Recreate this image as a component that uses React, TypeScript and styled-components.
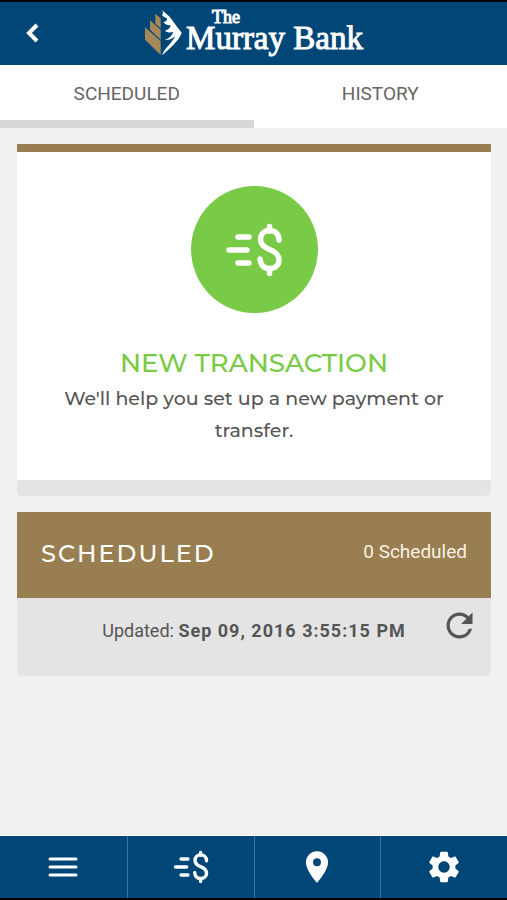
import React from "react";
import styled, { createGlobalStyle } from "styled-components";
import { MdPlace, MdRefresh, MdSettings } from "react-icons/md";

const colors = {
  blue: "#004677",
  divider: "#3f759b",
  gold: "#987e50",
  green: "#78ca47",
  page: "#f1f1f1",
  panel: "#e4e4e4",
  text: "#555555",
};

const display = `Montserrat, Inter, "Open Sans", sans-serif`;

const GlobalStyle = createGlobalStyle`
  *, *::before, *::after { box-sizing: border-box; }
  body {
    margin: 0;
    background: ${colors.page};
    color: ${colors.text};
    font-family: Roboto, "Liberation Sans", sans-serif;
  }
  h1, h2, p { margin: 0; font-weight: 400; }
  button { border: 0; padding: 0; background: none; color: inherit; font: inherit; cursor: pointer; }
  svg { display: block; }
`;

const Screen = styled.div`
  display: flex;
  flex-direction: column;
  min-height: 100vh;
  border-top: 2px solid #000;
  border-bottom: 2px solid #000;
`;

const Header = styled.header`
  display: grid;
  grid-template-columns: 64px 1fr 64px;
  align-items: center;
  height: 63px;
  background: ${colors.blue};
  color: #fff;
`;

const BackButton = styled.button`
  display: flex;
  align-items: center;
  justify-content: center;
  height: 100%;
  padding-bottom: 2px;
`;

const Brand = styled.h1`
  display: flex;
  align-items: center;
  justify-content: center;
  gap: 4px;
  height: 100%;
`;

const Wordmark = styled.span`
  display: flex;
  flex-direction: column;
  padding-bottom: 8px;
  font-family: "Liberation Serif", serif;
  -webkit-text-stroke: 1px #fff;
  white-space: nowrap;
`;

const WordTop = styled.span`
  padding-left: 26px;
  font-size: 18px;
  line-height: 16px;
`;

const WordMain = styled.span`
  font-size: 33px;
  line-height: 26px;
`;

const Tabs = styled.div`
  display: flex;
  height: 63px;
  background: #fff;
`;

const Tab = styled.button<{ $active?: boolean }>`
  flex: 1;
  padding-top: 2px;
  border-bottom: 8px solid ${(p) => (p.$active ? "#d8d8d8" : "#fff")};
  color: #666;
  font-size: 19px;
  line-height: 24px;
`;

const Content = styled.main`
  display: flex;
  flex: 1;
  flex-direction: column;
  gap: 16px;
  padding: 16px 16px 16px 17px;
  border-bottom: 1px solid #fff;
`;

const ActionCard = styled.button`
  display: flex;
  flex-direction: column;
  align-items: center;
  padding: 34px 40px 33px;
  border-top: 8px solid ${colors.gold};
  border-bottom: 16px solid ${colors.panel};
  border-radius: 0 0 5px 5px;
  background: #fff;
`;

const IconCircle = styled.span`
  display: flex;
  align-items: center;
  justify-content: center;
  width: 127px;
  height: 127px;
  border-radius: 50%;
  background: ${colors.green};
  color: #fff;
`;

const ActionTitle = styled.span`
  margin-top: 34px;
  color: ${colors.green};
  font-family: ${display};
  font-size: 26px;
  font-weight: 500;
  line-height: 32px;
`;

const ActionText = styled.span`
  margin-top: 4px;
  font-family: ${display};
  font-size: 19px;
  font-weight: 500;
  line-height: 32px;
`;

const Panel = styled.section`
  border-radius: 0 0 5px 5px;
  background: ${colors.panel};
`;

const PanelHeader = styled.div`
  display: flex;
  align-items: center;
  justify-content: space-between;
  height: 86px;
  padding: 0 24px;
  background: ${colors.gold};
  color: #fff;
`;

const PanelTitle = styled.h2`
  padding-bottom: 2px;
  font-family: ${display};
  font-size: 24px;
  font-weight: 500;
  letter-spacing: 2px;
  line-height: 32px;
`;

const Count = styled.span`
  padding-bottom: 6px;
  color: #faf0e2;
  font-size: 19px;
  line-height: 24px;
`;

const PanelBody = styled.div`
  display: grid;
  grid-template-columns: 64px 1fr 64px;
  align-items: start;
  height: 78px;
  padding-top: 8px;
`;

const Updated = styled.p`
  grid-column: 2;
  padding-top: 13px;
  font-size: 18px;
  line-height: 24px;
  text-align: center;
  white-space: nowrap;

  strong { font-weight: 700; letter-spacing: 1px; }
`;

const RefreshButton = styled.button`
  display: flex;
  justify-content: center;
`;

const BottomNav = styled.nav`
  display: grid;
  grid-template-columns: repeat(4, 1fr);
  height: 62px;
  background: ${colors.blue};
  color: #fff;
`;

const NavButton = styled.button`
  display: flex;
  align-items: center;
  justify-content: center;

  & + & { border-left: 1px solid ${colors.divider}; }
`;

function Emblem() {
  return (
    <svg width="38" height="48" viewBox="0 0 114 144" aria-hidden="true">
      <g fill="#a68856">
        <path d="M3 52 50 93V135L3 89Z" />
        <path d="M18 31 50 59V89L18 59Z" />
        <path d="M34 11 50 25V55L34 41Z" />
      </g>
      <path
        fill="#fff"
        d="M54 0C62 9 74 15 84 29C94 43 103 55 113 68C106 90 84 110 54 136C60 117 83 100 94 79C85 87 74 91 62 90C74 85 84 78 88 65C80 69 71 68 62 62C72 60 79 55 80 45C71 47 63 43 58 36C66 36 70 31 69 25C63 23 58 20 54 15C59 12 57 5 54 0Z"
      />
    </svg>
  );
}

function PayIcon({ width, height }: { width: number; height: number }) {
  return (
    <svg
      width={width}
      height={height}
      viewBox="0 0 58 54"
      fill="none"
      stroke="currentColor"
      strokeWidth="5.5"
      strokeLinecap="round"
      aria-hidden="true"
    >
      <path d="M13 14H24M4 27H22M13 40H24" />
      <path d="M44.5 3.5V8M44.5 46V50.5" />
      <path d="M54 17C54 11 50 7.5 44.5 7.5C39 7.5 35.5 11.5 35.5 16.5C35.5 21.5 38.5 24 44.5 26.5C50.5 29 54 31.5 54 37C54 42 50 45.5 44.5 45.5C39 45.5 35.5 42 35 36" />
    </svg>
  );
}

export default function App() {
  return (
    <>
      <GlobalStyle />
      <Screen>
        <Header>
          <BackButton aria-label="Back">
            <svg width="16" height="22" viewBox="0 0 16 22" fill="none" stroke="currentColor" strokeWidth="4" aria-hidden="true">
              <path d="M13 3 5 11 13 19" />
            </svg>
          </BackButton>
          <Brand>
            <Emblem />
            <Wordmark>
              <WordTop>The</WordTop>
              <WordMain>Murray Bank</WordMain>
            </Wordmark>
          </Brand>
        </Header>
        <Tabs role="tablist">
          <Tab role="tab" aria-selected="true" $active>SCHEDULED</Tab>
          <Tab role="tab" aria-selected="false">HISTORY</Tab>
        </Tabs>
        <Content>
          <ActionCard>
            <IconCircle>
              <PayIcon width={58} height={54} />
            </IconCircle>
            <ActionTitle>NEW TRANSACTION</ActionTitle>
            <ActionText>We'll help you set up a new payment or transfer.</ActionText>
          </ActionCard>
          <Panel>
            <PanelHeader>
              <PanelTitle>SCHEDULED</PanelTitle>
              <Count>0 Scheduled</Count>
            </PanelHeader>
            <PanelBody>
              <Updated>
                Updated: <strong>Sep 09, 2016 3:55:15 PM</strong>
              </Updated>
              <RefreshButton aria-label="Refresh">
                <MdRefresh size={39} />
              </RefreshButton>
            </PanelBody>
          </Panel>
        </Content>
        <BottomNav>
          <NavButton aria-label="Menu">
            <svg width="30" height="22" viewBox="0 0 30 22" stroke="currentColor" strokeWidth="3" strokeLinecap="round" aria-hidden="true">
              <path d="M2 3H28M2 11H28M2 19H28" />
            </svg>
          </NavButton>
          <NavButton aria-label="Payments">
            <PayIcon width={36} height={34} />
          </NavButton>
          <NavButton aria-label="Locations">
            <MdPlace size={38} />
          </NavButton>
          <NavButton aria-label="Settings">
            <MdSettings size={38} />
          </NavButton>
        </BottomNav>
      </Screen>
    </>
  );
}
